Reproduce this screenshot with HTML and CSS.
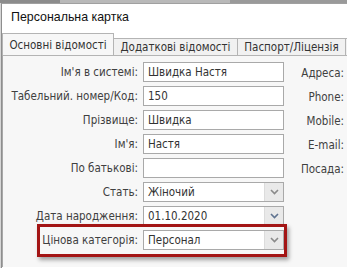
FILE: index.html
```html
<!DOCTYPE html>
<html lang="uk">
<head>
    <meta charset="UTF-8">
    <title>Персональна картка</title>
    <link rel="stylesheet" href="styles.css">
</head>
<body>
    <div class="backdrop"></div>
    <div class="window">
        <div class="title">Персональна картка</div>
        <div class="tabs">
            <div class="tab active">Основні відомості</div>
            <div class="tab second">Додаткові відомості</div>
            <div class="tab third">Паспорт/Ліцензія</div>
            <div class="tab cut"></div>
        </div>
        <div class="panel">
            <div class="form">
                <label>Ім'я в системі:</label>
                <div class="field">Швидка Настя</div>
                <label>Табельний. номер/Код:</label>
                <div class="field">150</div>
                <label>Прізвище:</label>
                <div class="field">Швидка</div>
                <label>Ім'я:</label>
                <div class="field">Настя</div>
                <label>По батькові:</label>
                <div class="field"></div>
                <label>Стать:</label>
                <div class="field select"><span>Жіночий</span><i class="drop"><svg width="9" height="6" viewBox="0 0 9 6"><path d="M1 1 L4.5 4.5 L8 1" fill="none" stroke="#8a8a8a" stroke-width="1.6"/></svg></i></div>
                <label>Дата народження:</label>
                <div class="field select"><span>01.10.2020</span><i class="drop"><svg width="9" height="6" viewBox="0 0 9 6"><path d="M1 1 L4.5 4.5 L8 1" fill="none" stroke="#5f7390" stroke-width="1.6"/></svg></i></div>
                <label>Цінова категорія:</label>
                <div class="field select"><span>Персонал</span><i class="drop"><svg width="9" height="6" viewBox="0 0 9 6"><path d="M1 1 L4.5 4.5 L8 1" fill="none" stroke="#8a8a8a" stroke-width="1.6"/></svg></i></div>
            </div>
            <div class="side">
                <label>Адреса:</label>
                <label>Phone:</label>
                <label>Mobile:</label>
                <label>E-mail:</label>
                <label>Посада:</label>
            </div>
            <!-- annotation frame around the price category row -->
            <div class="highlight"></div>
        </div>
    </div>
</body>
</html>
```

FILE: styles.css
```css
body {
    margin: 0;
    width: 347px;
    height: 268px;
    overflow: hidden;
    background: #d6d6d6;
    font-family: "DejaVu Sans Condensed", "Liberation Sans", Arial, sans-serif;
    font-size: 11.5px;
    color: #404040;
}
.backdrop {
    height: 3px;
    background: linear-gradient(to right, #8c8c8c 0, #8c8c8c 60px, #b9b9b9 60px, #b9b9b9 230px, #9a9a9a 230px);
}
.window {
    margin-left: 1px;
    height: 264px;
    overflow: hidden;
    background: #fff;
    border-left: 1px solid #8e8e8e;
    border-top: 1px solid #a0a0a0;
}
.title {
    height: 29px;
    line-height: 27px;
    padding-left: 9px;
    font-family: "Liberation Sans", Arial, sans-serif;
    font-size: 12.4px;
    color: #111;
}
.tabs {
    display: flex;
    align-items: flex-end;
    height: 22px;
    overflow: hidden;
}
.tab {
    flex: none;
    box-sizing: border-box;
    height: 17px;
    line-height: 16px;
    text-align: center;
    border: 1px solid #b4b4b4;
    border-right: none;
    border-bottom: none;
    background: #f1f1f1;
    color: #333;
    white-space: nowrap;
}
.tab.active {
    width: 112px;
    height: 23px;
    line-height: 22px;
    position: relative;
    top: 1px;
    background: #f7f7f7;
    border-right: 1px solid #b4b4b4;
    z-index: 1;
}
.tab.second {
    width: 123px;
    border-left: none;
}
.tab.third {
    width: 108px;
}
.tab.cut {
    width: 10px;
}
.panel {
    position: relative;
    display: flex;
    height: 205px;
    padding-top: 6px;
    background: #f7f7f7;
    border-top: 1px solid #b4b4b4;
    border-left: 1px solid #a8a8a8;
}
.form {
    display: grid;
    grid-template-columns: 135px 141px;
    grid-auto-rows: 20px;
    column-gap: 5px;
    row-gap: 4px;
}
label {
    text-align: right;
    line-height: 20px;
    white-space: nowrap;
}
.field {
    display: flex;
    align-items: center;
    background: #fff;
    border: 1px solid #a9a9a9;
    padding-left: 4px;
    color: #333;
    box-sizing: border-box;
}
.field.select span {
    flex: 1;
}
.drop {
    width: 18px;
    height: 18px;
    display: flex;
    align-items: center;
    justify-content: center;
    background: #e9e9e9;
    border-left: 1px solid #dcdcdc;
}
.side {
    display: grid;
    grid-auto-rows: 20px;
    row-gap: 4px;
    width: 60px;
    padding-top: 1px;
}
.highlight {
    position: absolute;
    left: 34px;
    top: 168px;
    width: 244px;
    height: 27px;
    border: 3px solid #a31515;
    box-shadow: 2px 3px 4px rgba(0, 0, 0, 0.35);
}
```
